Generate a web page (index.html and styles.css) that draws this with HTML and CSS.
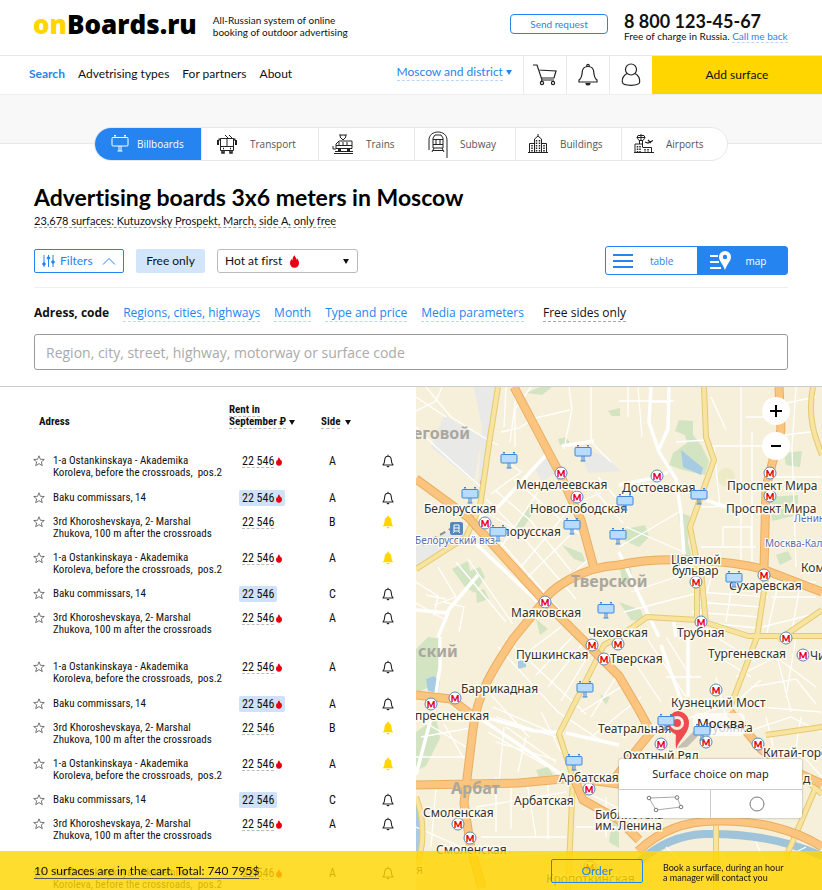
FILE: index.html
```html
<!DOCTYPE html>
<html lang="en">
<head>
<meta charset="utf-8">
<meta name="viewport" content="width=device-width, initial-scale=1">
<title>onBoards.ru</title>
<link rel="stylesheet" href="styles.css">
</head>
<body>
<svg class="sprite" aria-hidden="true">
  <symbol id="star" viewBox="0 0 12 12"><path d="M6 .8l1.4 3.5 3.9.2-3 2.4 1 3.8L6 8.6l-3.300 2.100 1-3.800-3-2.400 3.900-.2z" fill="none" stroke="#555" stroke-width=".8"/></symbol>
  <symbol id="flame" viewBox="0 0 10 14"><path d="M5 0C5.600 2 7.200 2.900 7.300 5c.5-.3.7-.8.7-1.400C9.300 5.200 10 6.800 10 8.700 10 11.900 7.900 14 5 14S0 11.900 0 8.900C0 6.900 1 5.400 1.800 4.300c.1.800.4 1.300.9 1.500C2.600 3.400 3.600 1.400 5 0z" fill="#e60012"/></symbol>
  <symbol id="bell" viewBox="0 0 12 14"><path d="M1 11h10c-1.300-1.300-1.600-2.600-1.700-5C9.200 3.700 8 2.300 6 2.300S2.800 3.700 2.700 6C2.600 8.400 2.300 9.700 1 11zM6 2.300V.8" fill="none" stroke="#222" stroke-width="1.100" stroke-linejoin="round"/><path d="M4.500 12h3c-.2.900-.8 1.300-1.500 1.300S4.700 12.900 4.500 12z" fill="#222"/></symbol>
  <symbol id="bell-on" viewBox="0 0 12 14"><path d="M.6 11.200h10.800C10 10 9.600 8.600 9.500 6.200 9.400 3.700 8.300 2.200 6.800 1.900V1.200a.8.800 0 0 0-1.600 0v.7C3.700 2.200 2.600 3.700 2.500 6.200 2.400 8.600 2 10 .6 11.200zM4.500 12h3c-.2.900-.8 1.400-1.500 1.400S4.700 12.900 4.500 12z" fill="#ffd600"/></symbol>
  <symbol id="board" width="18" height="18" viewBox="0 0 18 18"><path d="M3 1.500h2M13 1.500h2M4 1.500v2M14 1.500v2M8 12v5M10 12v5M6.500 17h5" fill="none" stroke="currentColor"/><rect x="1" y="3.500" width="16" height="8.500" rx="1" fill="var(--face, none)" stroke="currentColor"/></symbol>
  <symbol id="metro" width="14" height="14" viewBox="0 0 14 14"><circle cx="7" cy="7" r="6" fill="#fff" stroke="#5f86b8" stroke-width="1"/><text x="7" y="10.500" text-anchor="middle" class="metro-mark">M</text></symbol>
</svg>

<div class="app">
<header class="top">
  <a class="logo" href="#"><span>on</span>Boards.ru</a>
  <p class="tagline">All-Russian system of online<br>booking of outdoor advertising</p>
  <button class="request" type="button">Send request</button>
  <div class="phone"><strong>8 800 123-45-67</strong><p>Free of charge in Russia. <a href="#">Call me back</a></p></div>
</header>

<nav class="main-nav" aria-label="Main">
  <div class="links"><a class="current" href="#">Search</a><a href="#">Advetrising types</a><a href="#">For partners</a><a href="#">About</a></div>
  <button class="region" type="button"><span>Moscow and district</span> <i class="caret"></i></button>
  <a class="icon-link" href="#" aria-label="Cart"><svg width="26" height="24" viewBox="0 0 26 24" fill="none" stroke="#222" stroke-width="1.200"><path d="M1 2h4l5 15h12M6 7l18 1-2 7H9M10 17l-1 2"/><circle cx="10" cy="20" r="1.600"/><circle cx="21" cy="20" r="1.600"/></svg></a>
  <a class="icon-link" href="#" aria-label="Notifications"><svg width="20" height="24" viewBox="0 0 20 24" fill="none" stroke="#222" stroke-width="1.200"><path d="M1 19h18v-2c-3-2-3-5-3.200-8C15.500 5.500 13 3.500 10 3.500S4.500 5.500 4.200 9C4 12 4 15 1 17zM8.800 3.500v-1a1.200 1.200 0 0 1 2.400 0v1"/><path d="M8 20.500h4a2 1.500 0 0 1-4 0z" fill="#222"/></svg></a>
  <a class="icon-link" href="#" aria-label="Profile"><svg width="20" height="24" viewBox="0 0 20 24" fill="none" stroke="#222" stroke-width="1.200"><circle cx="10" cy="6.500" r="5.500"/><path d="M6 10.500c-3.500 2-5 5.500-4.700 8.500.3 2.500 2.700 3.300 8.700 3.300s8.400-.8 8.700-3.300c.3-3-1.200-6.500-4.700-8.500"/></svg></a>
  <a class="add" href="#">Add surface</a>
</nav>

<div class="band">
  <div class="kinds">
    <a class="kind active" href="#"><svg width="18" height="20"><use href="#board"/></svg>Billboards</a>
    <a class="kind k-transport" href="#"><svg width="22" height="20" viewBox="0 0 22 20" fill="none" stroke="#222"><path d="M4.500 4.500h13v12h-13zM11 5v7M5 12.500h12M9 1l3 3M13 1l3 3"/><path d="M2 6v5M20 6v5M2.500 5.500h2M17.500 5.500h2" stroke-width="2"/><path d="M6 17v2h2v-2M14 17v2h2v-2M7 14.500h1M14 14.500h1" stroke-width="1.500"/></svg>Transport</a>
    <a class="kind k-trains" href="#"><svg width="22" height="20" viewBox="0 0 22 20" fill="none" stroke="#222"><path d="M7 1h8M9 1l-1 2 3 3 3-3-1-2M4 14.500V10l3-3h13v7.500zM4 11.500h16M7 8v3M11 8v3M15 8v3M2 19.500h19M3 17.500h18M1 12v3h3"/><path d="M6 16h3M15 16h3" stroke-width="2"/></svg>Trains</a>
    <a class="kind k-subway" href="#"><svg width="20" height="27" viewBox="0 0 20 27" fill="none" stroke="#222"><path d="M1 19V9c0-5 4-8 9-8s9 3 9 8v18"/><path d="M5 17V7l2-3h6l2 3v10zM5 8.500h10M5 13.500h10M8 9v4M12 9v4M6 17l-2 4M14 17l2 4M5 19.500h10"/></svg>Subway</a>
    <a class="kind k-buildings" href="#"><svg width="20" height="20" viewBox="0 0 20 20" fill="none" stroke="#222"><path d="M6.500 18V5L10 2l3.500 3v13M10 0v2M1.500 18V9.500h5M13.500 9.500h5V18M0 18.500h20"/><path d="M8.500 6v12M11.500 6v12M4 11v7M16 11v7" stroke-width="1.500" stroke-dasharray="1.500 1"/></svg>Buildings</a>
    <a class="kind k-airports" href="#"><svg width="20" height="20" viewBox="0 0 20 20" fill="none" stroke="#222"><path d="M3 3.500l1-2h6l1 2-2 3H5zM7 0v6M3 3.500h8M5.500 7v3M8.500 7v6M1 18v-8h7M8.500 13.500h9V18M0 18.500h20"/><path d="M3.500 12v6M6 12v6M11 15v3M14 15v3" stroke-width="1.500" stroke-dasharray="1.500 1"/><path d="M11 8l3 1 5-2.500M14 6l3 3" stroke-width="1.300"/></svg>Airports</a>
  </div>
</div>

<section class="search">
  <h1>Advertising boards 3x6 meters in Moscow</h1>
  <p class="summary"><a href="#">23,678 surfaces: Kutuzovsky Prospekt, March, side A, only free</a></p>
  <div class="tools">
    <button class="btn filters" type="button"><svg width="13" height="14" viewBox="0 0 13 14" stroke="#2684f0" fill="#2684f0"><path d="M2 1v12M6.500 1v12M11 1v12"/><circle cx="2" cy="10" r="1.300"/><circle cx="6.500" cy="4" r="1.300"/><circle cx="11" cy="8" r="1.300"/></svg>Filters<svg class="up" width="14" height="8" viewBox="0 0 14 8" fill="none" stroke="#2684f0"><path d="M1 7.500l6-6 6 6"/></svg></button>
    <button class="btn free" type="button">Free only</button>
    <div class="sort"><select aria-label="Sort order"><option>Hot at first</option></select><svg class="sort-flame" width="9" height="13"><use href="#flame"/></svg><i class="caret"></i></div>
    <div class="views">
      <button type="button"><svg width="20" height="14" viewBox="0 0 20 14" stroke="#2684f0" stroke-width="2"><path d="M0 1h20M0 7h20M0 13h20"/></svg>table</button>
      <button class="on" type="button"><svg width="21" height="20" viewBox="0 0 21 20"><path d="M0 5h8M0 11h9M0 17h11" stroke="#fff" stroke-width="2"/><path fill="#fff" fill-rule="evenodd" d="M15 0a6 6 0 0 1 6 6c0 4-4 7-6 13-2-6-6-9-6-13a6 6 0 0 1 6-6zm0 3.800a2.200 2.200 0 1 0 0 4.400 2.200 2.200 0 0 0 0-4.400z"/></svg>map</button>
    </div>
  </div>
  <div class="filters-nav"><label for="query">Adress, code</label><a href="#">Regions, cities, highways</a><a href="#">Month</a><a href="#">Type and price</a><a href="#">Media parameters</a><a class="dark" href="#">Free sides only</a></div>
  <input id="query" class="query" type="text" placeholder="Region, city, street, highway, motorway or surface code">
</section>

<main class="results">
  <div class="list">
    <table>
      <colgroup><col class="c-star"><col class="c-address"><col class="c-rent"><col class="c-side"><col></colgroup>
      <thead><tr><th class="h-address" colspan="2">Adress</th><th><u>Rent in</u><br><u>September ₽</u> <i class="caret"></i></th><th><u>Side</u> <i class="caret wide"></i></th><th></th></tr></thead>
      <tbody>
        <tr><td class="star"><svg><use href="#star"/></svg></td><td class="address">1-a Ostankinskaya - Akademika<br>Koroleva, before the crossroads,&nbsp; pos.2</td><td class="rent"><span><u>22 546</u><svg><use href="#flame"/></svg></span></td><td class="side">A</td><td class="bell"><svg><use href="#bell"/></svg></td></tr>
        <tr><td class="star"><svg><use href="#star"/></svg></td><td class="address">Baku commissars, 14</td><td class="rent"><span class="tag">22 546<svg><use href="#flame"/></svg></span></td><td class="side">A</td><td class="bell"><svg><use href="#bell"/></svg></td></tr>
        <tr><td class="star"><svg><use href="#star"/></svg></td><td class="address">3rd Khoroshevskaya, 2- Marshal<br>Zhukova, 100 m after the crossroads</td><td class="rent"><span><u>22 546</u></span></td><td class="side">B</td><td class="bell"><svg><use href="#bell-on"/></svg></td></tr>
        <tr><td class="star"><svg><use href="#star"/></svg></td><td class="address">1-a Ostankinskaya - Akademika<br>Koroleva, before the crossroads,&nbsp; pos.2</td><td class="rent"><span><u>22 546</u><svg><use href="#flame"/></svg></span></td><td class="side">A</td><td class="bell"><svg><use href="#bell-on"/></svg></td></tr>
        <tr><td class="star"><svg><use href="#star"/></svg></td><td class="address">Baku commissars, 14</td><td class="rent"><span class="tag">22 546</span></td><td class="side">C</td><td class="bell"><svg><use href="#bell"/></svg></td></tr>
        <tr><td class="star"><svg><use href="#star"/></svg></td><td class="address">3rd Khoroshevskaya, 2- Marshal<br>Zhukova, 100 m after the crossroads</td><td class="rent"><span><u>22 546</u><svg><use href="#flame"/></svg></span></td><td class="side">A</td><td class="bell"><svg><use href="#bell"/></svg></td></tr>
      </tbody>
      <tbody>
        <tr><td class="star"><svg><use href="#star"/></svg></td><td class="address">1-a Ostankinskaya - Akademika<br>Koroleva, before the crossroads,&nbsp; pos.2</td><td class="rent"><span><u>22 546</u><svg><use href="#flame"/></svg></span></td><td class="side">A</td><td class="bell"><svg><use href="#bell"/></svg></td></tr>
        <tr><td class="star"><svg><use href="#star"/></svg></td><td class="address">Baku commissars, 14</td><td class="rent"><span class="tag">22 546<svg><use href="#flame"/></svg></span></td><td class="side">A</td><td class="bell"><svg><use href="#bell"/></svg></td></tr>
        <tr><td class="star"><svg><use href="#star"/></svg></td><td class="address">3rd Khoroshevskaya, 2- Marshal<br>Zhukova, 100 m after the crossroads</td><td class="rent"><span><u>22 546</u></span></td><td class="side">B</td><td class="bell"><svg><use href="#bell-on"/></svg></td></tr>
        <tr><td class="star"><svg><use href="#star"/></svg></td><td class="address">1-a Ostankinskaya - Akademika<br>Koroleva, before the crossroads,&nbsp; pos.2</td><td class="rent"><span><u>22 546</u><svg><use href="#flame"/></svg></span></td><td class="side">A</td><td class="bell"><svg><use href="#bell-on"/></svg></td></tr>
        <tr><td class="star"><svg><use href="#star"/></svg></td><td class="address">Baku commissars, 14</td><td class="rent"><span class="tag">22 546</span></td><td class="side">C</td><td class="bell"><svg><use href="#bell"/></svg></td></tr>
        <tr><td class="star"><svg><use href="#star"/></svg></td><td class="address">3rd Khoroshevskaya, 2- Marshal<br>Zhukova, 100 m after the crossroads</td><td class="rent"><span><u>22 546</u><svg><use href="#flame"/></svg></span></td><td class="side">A</td><td class="bell"><svg><use href="#bell"/></svg></td></tr>
      </tbody>
      <tbody>
        <tr><td class="star"><svg><use href="#star"/></svg></td><td class="address">1-a Ostankinskaya - Akademika<br>Koroleva, before the crossroads,&nbsp; pos.2</td><td class="rent"><span><u>22 546</u><svg><use href="#flame"/></svg></span></td><td class="side">A</td><td class="bell"><svg><use href="#bell"/></svg></td></tr>
      </tbody>
    </table>
  </div>

  <div class="map">
    <svg class="chart" viewBox="0 0 406 503" preserveAspectRatio="xMinYMin slice" role="img" aria-label="Map of central Moscow">
      <rect width="406" height="503" fill="#f6efd9"/>
      <!-- rail yards -->
      <g fill="#e9e9e8">
        <path d="M58 0h22l-4 55-8 50-6-5 4-60zM28 28l38 22-8 45-43-35zM0 160l40-20 12 8-52 34zM167 60l22 10 16 14-32 2-6-12zM118 80l14-12 8 18-14 8z"/>
      </g>
      <!-- parks -->
      <g fill="#d3e4c3">
        <path d="M110 6l14-6h12l-10 8zM142 52l8-2 4 6-10 2zM192 24l12-3v8h-8zM263 33l14 1v14l8 10 8 16-4 14-22-5-14-5 4-12 14-10-2-8-10-4zM262 125l12 4-2 26 4 15-7-2zM368 66l18-2-2 16-14-2zM354 110l28-2v20l-26 6zM209 142l20-4 4 12-10 10-14-6zM203 175h10l4 18-10 6zM98 140l18-26 6 4-18 28zM146 158l20 8 4 10-12-4zM36 182l16-8 2 10 10-4 5 10-10 16-10-6zM60 204l8-2 5 10-12 4zM120 232l12 10-8 6zM0 262l12-12 14 2v18l-8 28-18 8zM0 345l20-14 4 20-14 28-10 5zM360 168l12-4 4 8-12 6zM120 383l12-3 5 8-14 2zM196 434l7 3v24l-10-6zM203 215l22 8 4 12-14-2zM184 308l10 2-4 8z"/>
        <circle cx="310" cy="90" r="9" fill="#ecebc7"/>
      </g>
      <g fill="#a7cbe2"><path d="M265 63l22 18-2 7-18-8zM10 292l8-3 6 5-2 12-10-2zM102 274l8-2v8l-8 2zM0 413c6 8 7 30 2 52H0z"/></g>
      <path d="M224 474c20-18 42-26 64-27 42-1 82 6 118 22" fill="none" stroke="#9fc3d8" stroke-width="8"/>
      <!-- local streets -->
      <g fill="none" stroke="#fff" stroke-width="1.300">
        <path d="M10 0l25 30 32 20 15 8M0 40l20 20 45 40M26 0l-6 14-20 10M0 10l30 20M85 45l18-4 16-10 35-8M90 0l-2 40M100 10l-6 45M115 0l-16 22v38M153 0l3 22-8 40M175 0v55l20 20M85 70l20 15-30 22M60 120l20 30 70 80M70 112l30 30 60 70M80 104l35 30 40 50M98 92l40 35 25 20M82 165l40-60M105 180l50-60M60 120l45 25M110 192l55-55M130 210l45-40M0 195l22 14-4 20M22 180l18 30-22 8M10 208l20 4M0 216l28 16M40 175l50 60M52 172l45 65M28 215l20 5-5 25M172 96l35 40M182 90l22 25M160 116l25-10"/>
        <path d="M203 14h55M222 0l4 50M212 0v30M235 15h20M260 55l30-2M298 60l6 60M295 10l15 33M325 0v180M336 45v135M325 59h25M296 59h30M330 30h32M380 0l-4 60 4 120M350 20l50-10M352 50l50-6M350 90h55M285 160h55M285 120l65-2M307 140h28v20h-28zM210 140l60 26M203 160l62-36M245 95l-35 10M215 205l60-20M208 225l70-18M282 205l70 5M280 215l65 5M276 225l68 5M282 235l60 6M298 180l-20 70M318 185l-8 50M365 185l-15 65M385 192l-10 58M406 225l-60 15M360 195h40M355 210h45"/>
        <path d="M82 260l60 65 45 30M90 252l80 75M105 270l40-30M120 288l38-40M132 300l36-45M145 314l25-42M68 300l45 50M80 330l60 20M72 345l60 35M90 340l50 35M77 320l70 30M80 355l60 18M88 340l-5 55M110 350l-8 35M125 325l20 40M60 340l-55 10M0 330l50 30M28 337l20 35M0 370h50M80 390v55M95 392v50M110 390l10 60M132 392v60M60 420l90-15M65 450h85M68 470l80-5M0 440l45 20M20 400l-5 60M160 400l60 30M160 440h40M165 325l40-25M175 350l50-40M200 290l-25 40M215 270l30 45M190 410v40"/>
        <path d="M230 250l40 60-20 30M250 250l25 40M290 262l45 28M300 250l40 25M320 290l40-20 40 30M335 300l45-8 20 25M345 320l60 5M320 315l25-22M360 265l15 60M380 250l-10 60M330 345l45-15 30 15M300 290l10 40M250 290h35M246 340l60-20M385 330l-5 30M350 330l10 40M388 370l18 20M300 460l20 30M340 455l15 35M250 460l20 20M230 480l25-10M370 470l20-10"/>
      </g>
      <g fill="none" stroke="#fff" stroke-width="3.500">
        <path d="M130 68L82 120 62 130M235 0l-2 35 10 30 17 27 5 35 3 40M253 0l-1 42-10 22M178 54l-32 5M203 98l35-7 14-6M290 113l20 7M58 155l80 75M0 223l32 3-10 24M30 226l32-38M203 165l28 60 12 25M24 250v30l-6 40-18 68M65 332l40 27 45 32M68 330l50 14 30 2M150 346l53 12M245 258l20 55M260 250l-3-20M272 250v60"/>
      </g>
      <path d="M80 3l-5 52-10 42M38 140l-32 18" fill="none" stroke="#8d8d89" stroke-width="2" stroke-dasharray="6 4"/>
      <!-- main roads -->
      <g fill="none" stroke-linejoin="round">
        <path id="boulevards" class="boulevard-edge" d="M82 0l-9 57-9 63-14 30-50 32M288 0l2 50 8 23-24 67 6 30M281 170v65M284 172l6 66M203 250l28-20 51 3 50 16h74M397 0c-6 30 2 50 9 68M351 184l-10 66-26 68M406 223l-44 30M406 340l-56 8M203 250l-15 8-45 89 14 43-5 113M300 432v71M380 385l26 22M0 410c8 20 10 50-2 75M370 470l30-70"/>
        <path class="boulevard-face" d="M82 0l-9 57-9 63-14 30-50 32M288 0l2 50 8 23-24 67 6 30M281 170v65M284 172l6 66M203 250l28-20 51 3 50 16h74M397 0c-6 30 2 50 9 68M351 184l-10 66-26 68M406 223l-44 30M406 340l-56 8M203 250l-15 8-45 89 14 43-5 113M300 432v71M380 385l26 22M0 410c8 20 10 50-2 75M370 470l30-70"/>
        <path class="avenue-edge" d="M98 0l45 85 22 48 13 48M0 92l52 38 76 84 75 75 20 34 12 22-20 25-15 20M406 205l-60-23c-30-8-100-14-143-4-40 2-70 26-75 36l-31 38c-20 30-36 55-40 90l-9 74 7 46 11 39M363 0l2 43-15 57-2 82M0 308l35 4 26 20M0 398l103-2 54-5 46 6 30 3M158 391l9 22 36 20 20 20M222 464c22-20 46-30 78-30 40-1 78 8 106 26M314 325l32 38 34 22 26 12"/>
        <path class="avenue-face" d="M98 0l45 85 22 48 13 48M0 92l52 38 76 84 75 75 20 34 12 22-20 25-15 20M406 205l-60-23c-30-8-100-14-143-4-40 2-70 26-75 36l-31 38c-20 30-36 55-40 90l-9 74 7 46 11 39M363 0l2 43-15 57-2 82M0 308l35 4 26 20M0 398l103-2 54-5 46 6 30 3M158 391l9 22 36 20 20 20M222 464c22-20 46-30 78-30 40-1 78 8 106 26M314 325l32 38 34 22 26 12"/>
      </g>

      <g class="district"><text x="-3" y="52">еговой</text><text x="155" y="200">Тверской</text><text x="2" y="270">ский</text><text x="35" y="407">Арбат</text></g>
      <g class="rail-label"><text x="-1" y="157">Белорусский вкз.</text><text x="378" y="135">Ленинский</text><text x="349" y="160">Москва-Кал</text></g>
      <g transform="translate(34 135)"><rect width="13" height="13" rx="2" fill="#5289bd"/><path d="M4 3h5v6H4zM3 11l1.500-2M10 11L8.500 9M4 6h5" fill="none" stroke="#fff"/></g>

      <g class="metro">
        <use href="#metro" x="138" y="79"/><use href="#metro" x="154" y="103"/><use href="#metro" x="62" y="129"/><use href="#metro" x="122" y="208"/><use href="#metro" x="234" y="82"/><use href="#metro" x="347" y="79"/><use href="#metro" x="347" y="102"/><use href="#metro" x="341" y="181"/><use href="#metro" x="273" y="188"/><use href="#metro" x="278" y="228"/><use href="#metro" x="363" y="244"/><use href="#metro" x="169" y="251"/><use href="#metro" x="195" y="250"/><use href="#metro" x="181" y="265"/><use href="#metro" x="380" y="261"/><use href="#metro" x="293" y="296"/><use href="#metro" x="32" y="304"/><use href="#metro" x="8" y="310"/><use href="#metro" x="238" y="350"/><use href="#metro" x="283" y="348"/><use href="#metro" x="335" y="350"/><use href="#metro" x="166" y="395"/><use href="#metro" x="35" y="430"/><use href="#metro" x="47" y="444"/><use href="#metro" x="167" y="473"/>
      </g>

      <g class="place">
        <text x="100" y="102">Менделеевская</text><text x="114" y="126">Новослободская</text><text x="8" y="126">Белорусская</text><text x="80" y="149">елорусская</text><text x="206" y="105">Достоевская</text><text x="311" y="103">Проспект Мира</text><text x="310" y="126">Проспект Мира</text><text x="255" y="177">Цветной</text><text x="256" y="188">бульвар</text><text x="313" y="203">Сухаревская</text><text x="385" y="185">Комсомольская</text><text x="95" y="230">Маяковская</text><text x="172" y="250">Чеховская</text><text x="261" y="250">Трубная</text><text x="100" y="272">Пушкинская</text><text x="194" y="276">Тверская</text><text x="292" y="271">Тургеневская</text><text x="394" y="273">Чистые</text><text x="45" y="306">Баррикадная</text><text x="-1" y="333">пресненская</text><text x="255" y="320">Кузнецкий Мост</text><text x="182" y="346">Театральная</text><text x="288" y="345">Лубянка</text><text x="207" y="373">Охотный Ряд</text><text x="347" y="370">Китай-город</text><text x="143" y="395">Арбатская</text><text x="98" y="418">Арбатская</text><text x="7" y="430">Смоленская</text><text x="20" y="467">Смоленская</text><text x="179" y="432">Библиотека</text><text x="179" y="443">им. Ленина</text><text x="387" y="396">д</text><text x="130" y="496">Кропоткинская</text><text x="0" y="487">я</text>
      </g>
      <g class="city"><rect x="277" y="326" width="52" height="23" rx="5"/><text x="281" y="341">Москва</text></g>
      <path d="M261 361l18-18 14-5-22 22z" fill="#888" opacity=".45"/>
      <path fill="#ee4b50" fill-rule="evenodd" d="M262 324a12 12 0 0 1 11 12c0 10-8 14-13 26-1-12 1-14-1-15a12 12 0 0 1 3-23zm-1 5a7 7 0 1 0 0 14 7 7 0 0 0 0-14z"/>
      <circle cx="261" cy="336" r="4" fill="#ee4b50"/>
      <g class="boards">
        <use href="#board" x="84" y="64"/><use href="#board" x="158" y="57"/><use href="#board" x="45" y="99"/><use href="#board" x="73" y="137"/><use href="#board" x="147" y="130"/><use href="#board" x="200" y="106"/><use href="#board" x="193" y="140"/><use href="#board" x="274" y="100"/><use href="#board" x="309" y="183"/><use href="#board" x="181" y="214"/><use href="#board" x="160" y="293"/><use href="#board" x="149" y="366"/><use href="#board" x="241" y="326"/><use href="#board" x="277" y="336"/>
      </g>
    </svg>
    <div class="zoom"><button type="button" aria-label="Zoom in"><svg width="12" height="12" stroke="#000" stroke-width="2"><path d="M0 6h12M6 0v12"/></svg></button><button type="button" aria-label="Zoom out"><svg width="12" height="12" stroke="#000" stroke-width="2"><path d="M1 6h10"/></svg></button></div>
    <div class="choice">
      <p>Surface choice on map</p>
      <div><button type="button" aria-label="Polygon"><svg width="38" height="18" viewBox="0 0 38 18" fill="#fff" stroke="#aaa"><path d="M3 3l28-1 4 10-25 3z"/><circle cx="3" cy="3" r="1.800" stroke="#777"/><circle cx="31" cy="2.500" r="1.800" stroke="#777"/><circle cx="35" cy="12" r="1.800" stroke="#777"/><circle cx="10" cy="15" r="1.800" stroke="#777"/></svg></button><button type="button" aria-label="Circle"><svg width="16" height="16" fill="none" stroke="#777"><circle cx="8" cy="8" r="7"/></svg></button></div>
    </div>
  </div>
</main>

<footer class="cart">
  <a href="#">10 surfaces are in the cart. Total: 740 795$</a>
  <button type="button">Order</button>
  <p>Book a surface, during an hour<br>a manager will contact you</p>
</footer>
</div>
</body>
</html>
```
FILE: styles.css
```css
:root {
  --blue: #2684f0;
  --yellow: #ffd600;
  --ui: Lato, "Liberation Sans", sans-serif;
  --wide: "Open Sans", "Noto Sans", sans-serif;
  --narrow: "Liberation Sans Narrow", "Roboto Condensed", Roboto, sans-serif;
}
* { box-sizing: border-box; }
body { margin: 0; font: 12px/16px var(--ui); font-variant-ligatures: none; color: #111; background: #fff; }
p, h1 { margin: 0; }
a { color: inherit; text-decoration: none; }
button { font: inherit; color: inherit; background: none; border: 0; padding: 0; cursor: pointer; }
.sprite { position: absolute; width: 0; height: 0; }
.app { display: flex; flex-direction: column; height: 100vh; }
.caret { display: inline-block; border: solid transparent; border-width: 5px 3px 0; border-top-color: currentColor; vertical-align: middle; }

.top { display: flex; align-items: center; height: 56px; flex: none; padding: 0 30px 8px 33px; border-bottom: 1px solid #e8e8e8; white-space: nowrap; }
.logo { font: 800 26px/32px var(--wide); color: #000; }
.logo span { color: var(--yellow); }
.tagline { margin-left: 16px; padding-top: 4px; font-size: 10px; line-height: 12px; }
.request { width: 98px; height: 20px; margin-left: auto; border: 1px solid var(--blue); border-radius: 4px; color: var(--blue); font-size: 10px; }
.phone { width: 168px; margin-left: 16px; padding-top: 8px; font-size: 10px; line-height: 14px; }
.phone strong { display: block; font-size: 18px; line-height: 16px; }
.phone a { color: var(--blue); border-bottom: 1px dashed #b9d7fa; }

.main-nav { display: flex; height: 38px; flex: none; white-space: nowrap; }
.links { display: flex; gap: 13px; padding: 10px 0 0 29px; }
.links .current { color: var(--blue); font-weight: 700; }
.region { margin: 8px 11px 0 auto; align-self: flex-start; color: var(--blue); }
.region span { display: inline-block; border-bottom: 1px dashed #b9d7fa; }
.icon-link { display: grid; place-items: center; width: 43px; border-left: 1px solid #e8e8e8; }
.add { display: grid; place-items: center; width: 170px; background: var(--yellow); }

.band { display: flex; justify-content: center; flex: none; height: 50px; padding-top: 32px; background: #f8f8f8; border-top: 1px solid #eee; border-bottom: 1px solid #e8e8e8; }
.kinds { display: flex; height: 34px; border: 1px solid #e8e8e8; border-radius: 17px; overflow: hidden; background: #fff; font: 10px/16px var(--wide); color: #555; }
.kind { display: flex; align-items: center; gap: 8px; width: 106px; padding-left: 16px; }
.kind + .kind { border-left: 1px solid #e8e8e8; }
.kind.active { color: #fff; background: var(--blue); }
.kind.k-transport { width: 117px; gap: 12px; padding-left: 14px; }
.kind.k-trains { width: 96px; gap: 12px; padding-left: 13px; }
.kind.k-subway { width: 101px; gap: 12px; padding-left: 13px; }
.kind.k-buildings, .kind.k-airports { gap: 12px; padding-left: 12px; }

.search { flex: none; padding: 39px 34px 16px; border-bottom: 1px solid #ccc; }
h1 { font-size: 23px; line-height: 28px; color: #000; }
.summary { margin-top: 2px; font-size: 11px; }
.summary a { border-bottom: 1px dashed #999; }
.tools { display: flex; align-items: center; gap: 12px; margin-top: 17px; padding-bottom: 12px; border-bottom: 1px solid #eee; }
.btn { height: 24px; border-radius: 2px; }
.filters { display: flex; align-items: center; gap: 5px; width: 90px; padding-left: 7px; border: 1px solid var(--blue); color: var(--blue); }
.filters .up { margin-left: 4px; }
.free { width: 69px; background: #d3e5fb; }
.sort { position: relative; width: 141px; }
.sort select { display: block; appearance: none; width: 100%; height: 24px; padding: 0 7px; border: 1px solid #bbb; border-radius: 3px; background: #fff; font: inherit; color: inherit; }
.sort-flame { position: absolute; left: 73px; top: 6px; }
.sort .caret { position: absolute; right: 9px; top: 10px; }
.views { display: flex; width: 183px; height: 29px; margin-left: auto; border: 1px solid var(--blue); border-radius: 3px; font: 10px/16px var(--wide); color: var(--blue); }
.views button { display: flex; width: 50%; align-items: center; gap: 17px; padding-left: 7px; }
.views .on { padding-left: 13px; gap: 15px; background: var(--blue); color: #fff; }
.filters-nav { display: flex; gap: 14px; margin-top: 16px; font: 12px/17px var(--wide); white-space: nowrap; }
.filters-nav label { font-weight: 700; }
.filters-nav a { color: var(--blue); border-bottom: 1px dashed #b9d7fa; }
.filters-nav .dark { margin-left: 5px; color: #111; border-color: #aaa; }
.query { display: block; width: 100%; height: 36px; margin-top: 12px; padding: 0 11px; border: 1px solid #999; border-radius: 3px; font: 14px/20px var(--wide); }
.query::placeholder { color: #aaa; opacity: 1; }

.results { display: grid; grid-template-columns: 416fr 406fr; flex: 1; min-height: 0; }
.list { overflow: auto; scrollbar-width: none; }
table { width: 100%; table-layout: fixed; border-collapse: collapse; font: 12px/12px var(--narrow); white-space: nowrap; }
.c-star { width: 53px; }
.c-address { width: 176px; }
.c-rent { width: 92px; }
.c-side { width: 54px; }
th { height: 49px; padding: 0 0 8px; vertical-align: bottom; text-align: left; font-size: 11px; }
.h-address { padding-left: 39px; }
th u, .rent u { text-decoration: none; border-bottom: 1px dashed #bbb; }
.wide { margin-left: 2px; }
td { padding: 6px 0; vertical-align: top; }
tbody tr:first-child td { padding-top: 19px; padding-bottom: 7px; }
td svg { display: block; width: 12px; height: 12px; }
.address { font-size: 11px; }
.list .star { padding-left: 33px; }
.list .rent { padding-left: 10px; }
.rent span { display: inline-flex; align-items: center; gap: 2px; padding: 0 3px; }
.rent .tag { margin: -2px 0; padding: 2px 3px; border-radius: 2px; background: #cfe2fa; }
.rent svg { width: 6px; height: 9px; }
.list .side { padding-left: 8px; }
.list .bell { padding-left: 7px; }
.bell svg { height: 14px; margin: -1px 0; }

.map { position: relative; overflow: hidden; }
.chart { position: absolute; width: 100%; height: 100%; }
.chart text { font-family: "Noto Sans", "Open Sans", sans-serif; }
.boulevard-edge { stroke: #e3ca75; stroke-width: 6px; }
.boulevard-face { stroke: #f8e49e; stroke-width: 4px; }
.avenue-edge { stroke: #e8ae62; stroke-width: 9px; }
.avenue-face { stroke: #fcc57f; stroke-width: 7px; }
.district text { font-size: 16px; font-weight: 700; fill: #aaa79e; }
.rail-label text { font-size: 10px; fill: #5a6cab; stroke: #fff; stroke-width: 2px; paint-order: stroke; }
.place text { font-size: 12px; fill: #333; stroke: #fffbee; stroke-width: 3px; paint-order: stroke; }
.metro-mark { font-size: 9px; font-weight: 800; fill: #e60012; }
.city rect { fill: #fff; opacity: .75; }
.city text { font-size: 13px; fill: #222; }
.boards { color: #3d87dc; --face: #b8dcff; }
.zoom { position: absolute; top: 10px; right: 32px; display: grid; gap: 7px; }
.zoom button { display: grid; place-items: center; width: 28px; height: 28px; border-radius: 50%; background: #fff; }
.choice { position: absolute; right: 20px; bottom: 72px; width: 183px; background: #fff; border-radius: 2px; box-shadow: 0 0 2px #888; font: 11px/30px var(--wide); text-align: center; }
.choice div { display: flex; border-top: 1px solid #ccc; }
.choice button { display: grid; flex: 1; place-items: center; height: 28px; }
.choice button + button { border-left: 1px solid #ccc; }

.cart { position: fixed; inset: auto 0 0; display: flex; align-items: center; height: 39px; padding: 0 34px; background: rgb(255 214 0 / 82%); white-space: nowrap; }
.cart a { border-bottom: 1px solid #555; line-height: 15px; }
.cart button { width: 92px; height: 24px; margin-left: auto; border: 1px solid var(--blue); border-radius: 2px; color: var(--blue); }
.cart p { width: 125px; margin-left: 20px; padding-top: 4px; font-size: 9px; line-height: 10px; }
```
